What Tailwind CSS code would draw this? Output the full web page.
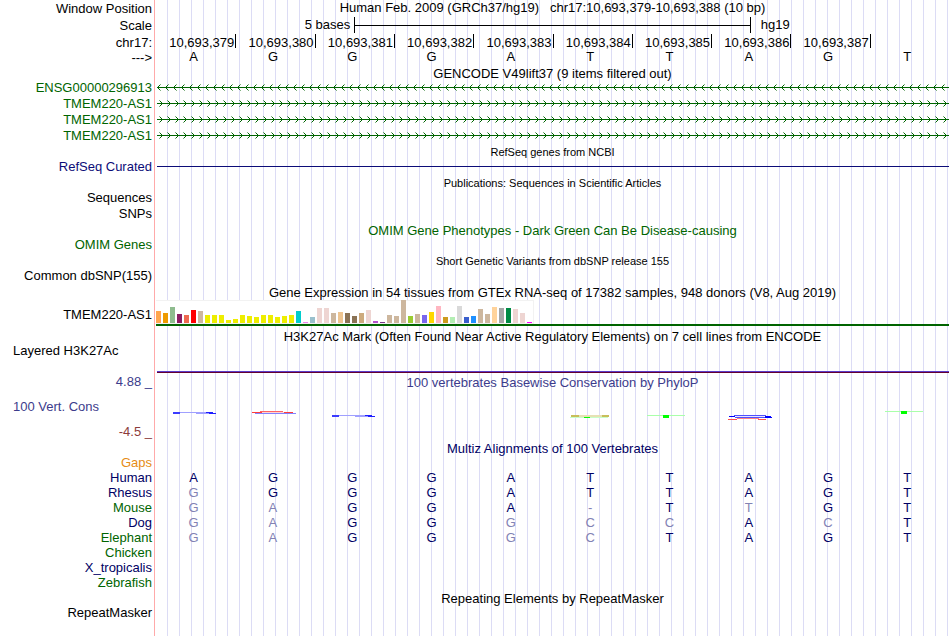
<!DOCTYPE html>
<html lang="en">
<head>
  <meta charset="UTF-8">
  <meta name="viewport" content="width=device-width, initial-scale=1.0">
  <title>Human Feb. 2009 (GRCh37/hg19) chr17:10,693,379-10,693,388</title>
  <script src="https://cdn.jsdelivr.net/npm/@tailwindcss/browser@4"></script>
</head>
<body class="bg-white">

<main class="flex min-h-screen overflow-hidden font-['Liberation_Sans',Arial,sans-serif] text-[13px] leading-4 text-black">

  <!-- Track labels -->
  <div class="w-[155px] shrink-0 border-r border-[#ffaaaa] pt-px pr-[2px] text-right whitespace-nowrap">
    <div class="h-[17px]">Window Position</div>
    <div class="h-[17px]">Scale</div>
    <div class="h-[15px]">chr17:</div>
    <div class="h-[30px]">---&gt;</div>
    <div class="h-16 text-[#006400]">
      <div>ENSG00000296913</div>
      <div>TMEM220-AS1</div>
      <div>TMEM220-AS1</div>
      <div>TMEM220-AS1</div>
    </div>
    <div class="mt-[15px] h-4 text-[#0c0c78]">RefSeq Curated</div>
    <div class="mt-[15px] h-4">Sequences</div>
    <div class="h-4">SNPs</div>
    <div class="mt-[15px] h-4 text-[#006400]">OMIM Genes</div>
    <div class="mt-[15px] h-4">Common dbSNP(155)</div>
    <div class="mt-[23px] h-4">TMEM220-AS1</div>
    <div class="mt-5 h-4 pl-[13px] text-left">Layered H3K27Ac</div>
    <div class="mt-[15px] h-4 text-[#3c3c8c]">4.88 _</div>
    <div class="mt-[9px] h-4 pl-[13px] text-left text-[#3c3c8c]">100 Vert. Cons</div>
    <div class="mt-[9px] h-4 text-[#8c3c3c]">-4.5 _</div>
    <div class="mt-[15px] leading-[15px]">
      <div class="text-[#e68c14]">Gaps</div>
      <div class="text-[#000064]">Human</div>
      <div class="text-[#000064]">Rhesus</div>
      <div class="text-[#006400]">Mouse</div>
      <div class="text-[#000064]">Dog</div>
      <div class="text-[#006400]">Elephant</div>
      <div class="text-[#006400]">Chicken</div>
      <div class="text-[#000064]">X_tropicalis</div>
      <div class="text-[#006400]">Zebrafish</div>
    </div>
    <div class="mt-[15px] h-4">RepeatMasker</div>
  </div>

  <!-- Tracks -->
  <div class="ml-px min-w-0 flex-1 bg-[repeating-linear-gradient(to_right,transparent_0_11px,#dcdcf5_11px_12px)] pr-px text-center whitespace-nowrap">
    <h1 class="h-4 whitespace-pre">Human Feb. 2009 (GRCh37/hg19)   chr17:10,693,379-10,693,388 (10 bp)</h1>

    <div class="grid h-[18px] grid-cols-4 items-center">
      <div class="pr-1 text-right">5 bases</div>
      <div class="col-span-2 flex h-4 items-center border-x border-black"><div class="h-px w-full bg-black"></div></div>
      <div class="pl-[10px] text-left">hg19</div>
    </div>

    <div id="positions" class="grid h-[15px] grid-cols-10 text-right leading-[18px]"></div>
    <div data-bases="AGGGATTAGT" class="grid h-4 grid-cols-10"></div>

    <h2 class="h-[15px] leading-[18px]">GENCODE V49lift37 (9 items filtered out)</h2>
    <svg class="block h-16 w-full" aria-label="GENCODE transcripts">
      <defs>
        <pattern id="minus" width="8" height="16" patternUnits="userSpaceOnUse">
          <path d="M1 7.5H4M2 6.5H3M2 8.5H3M3 5.5H4M3 9.5H4" stroke="#006400"/>
          <path d="M4 4.5H5M4 10.5H5" stroke="#006400" stroke-opacity=".5"/>
        </pattern>
        <pattern id="plus" width="8" height="16" patternUnits="userSpaceOnUse">
          <path d="M4 7.5H7M5 6.5H6M5 8.5H6M4 5.5H5M4 9.5H5" stroke="#006400"/>
          <path d="M3 4.5H4M3 10.5H4" stroke="#006400" stroke-opacity=".5"/>
        </pattern>
      </defs>
      <rect width="100%" height="16" fill="url(#minus)"/>
      <rect y="16" width="100%" height="48" fill="url(#plus)"/>
      <g fill="#006400">
        <rect x="1" y="7" width="100%" height="1"/>
        <rect x="1" y="23" width="100%" height="1"/>
        <rect x="1" y="39" width="100%" height="1"/>
        <rect x="1" y="55" width="100%" height="1"/>
      </g>
    </svg>

    <h2 class="h-[15px] text-[11px]">RefSeq genes from NCBI</h2>
    <div class="h-4 pt-[7px] pl-px"><div class="h-px bg-[#0c0c78]"></div></div>

    <h2 class="h-[47px] text-[11px]">Publications: Sequences in Scientific Articles</h2>

    <h2 class="h-[31px] leading-[18px] text-[#006400]">OMIM Gene Phenotypes - Dark Green Can Be Disease-causing</h2>

    <h2 class="h-[31px] text-[11px]">Short Genetic Variants from dbSNP release 155</h2>

    <h2 class="h-4 leading-[18px]">Gene Expression in 54 tissues from GTEx RNA-seq of 17382 samples, 948 donors (V8, Aug 2019)</h2>
    <div class="mb-[2px] border-b-2 border-[#006400]">
      <div id="gtex" class="flex h-6 w-[378px] items-end gap-[2px] border-b border-[#f0f0f0] bg-white shadow-[inset_0_1px_#f2f2f2,inset_-1px_0_#f2f2f2]"></div>
    </div>

    <h2 class="h-[15px] leading-[18px]">H3K27Ac Mark (Often Found Near Active Regulatory Elements) on 7 cell lines from ENCODE</h2>
    <div class="h-[31px] pt-7 pl-px"><div class="h-[2px] border-t border-[#5a3cc8] bg-[#640032]"></div></div>

    <h2 class="h-4 leading-[18px] text-[#3c3c8c]">100 vertebrates Basewise Conservation by PhyloP</h2>
    <!-- Conservation logo, one cell per base -->
    <div class="grid h-[51px] grid-cols-10">
      <svg class="h-[50px] w-full overflow-visible">
        <path d="M17 23H24" stroke="#3c3cff" stroke-width="2"/>
        <path d="M24 22.5H52M40 23.5H54" stroke="#a0a0ff"/>
        <path d="M50 22.5H57M53 23.5H60" stroke="#1e1eff"/>
      </svg>
      <svg class="h-[50px] w-full overflow-visible">
        <path d="M20 23.5H61" stroke="#8282ff"/>
        <path d="M17 22.5H27M49 22.5H58" stroke="#ff3c3c"/>
        <path d="M25 21.5H48" stroke="#ff6464"/>
        <path d="M27 22.5H49" stroke="#ffd2d2"/>
      </svg>
      <svg class="h-[50px] w-full overflow-visible">
        <path d="M17 26H24" stroke="#3c3cff" stroke-width="2"/>
        <path d="M24 25.5H52M40 26.5H54" stroke="#a0a0ff"/>
        <path d="M50 25.5H57M53 26.5H60" stroke="#1e1eff"/>
      </svg>
      <span></span>
      <span></span>
      <svg class="h-[50px] w-full overflow-visible">
        <path d="M18 26H26M49 26H56" stroke="#c8be5a" stroke-width="2"/>
        <path d="M26 26H49" stroke="#e6e1b4" stroke-width="2"/>
        <path d="M17 27.5H55" stroke="#c8ffc8"/>
        <path d="M31 27.5H37" stroke="#00ff00"/>
      </svg>
      <svg class="h-[50px] w-full overflow-visible">
        <path d="M15 25.5H53" stroke="#aaffaa"/>
        <path d="M31 26.5H37" stroke="#00ff00" stroke-width="3"/>
      </svg>
      <svg class="h-[50px] w-full overflow-visible">
        <path d="M23 25.5H55M24 27.5H55" stroke="#5050ff"/>
        <path d="M18 26.5H24M54 26.5H60M54 27.5H61" stroke="#0000ff"/>
        <path d="M25 26.5H53" stroke="#e6e6ff"/>
        <path d="M26 28.5H48" stroke="#ff8282"/>
        <path d="M17 29.5H26M47 29.5H55" stroke="#ff5050"/>
      </svg>
      <span></span>
      <svg class="h-[50px] w-full overflow-visible">
        <path d="M15 21.5H53" stroke="#aaffaa"/>
        <path d="M31 22.5H37" stroke="#00ff00" stroke-width="3"/>
      </svg>
    </div>

    <h2 class="h-[29px] text-[#000064]">Multiz Alignments of 100 Vertebrates</h2>
    <div class="h-[121px] leading-[15px] text-[#000064]">
      <div data-bases="AGGGATTAGT" class="grid grid-cols-10"></div>
      <div data-bases="gGGGATTAGT" class="grid grid-cols-10"></div>
      <div data-bases="gaGGA-TtGT" class="grid grid-cols-10"></div>
      <div data-bases="gaGGgccAcT" class="grid grid-cols-10"></div>
      <div data-bases="gaGGgcTAGT" class="grid grid-cols-10"></div>
    </div>

    <h2>Repeating Elements by RepeatMasker</h2>
  </div>
</main>

<script>
  // Coordinate ruler
  const positions = document.getElementById("positions");
  for (let pos = 379; pos <= 387; pos++) {
    positions.insertAdjacentHTML("beforeend",
      `<div class="-mr-px h-[14px] border-r border-black pr-px">10,693,${pos}</div>`);
  }

  // Lower case and gaps are bases that differ from human
  document.querySelectorAll("[data-bases]").forEach(row => {
    for (const base of row.dataset.bases) {
      const faded = base === "-" || base !== base.toUpperCase();
      row.insertAdjacentHTML("beforeend",
        `<span class="pr-1 ${faded ? "text-[#8282b4]" : ""}">${base.toUpperCase()}</span>`);
    }
  });

  // GTEx tissues: [height, color]
  const tissues = [
    [12, "#ffa54f"], [10, "#ee9a00"], [16, "#8fbc8f"], [9, "#8b1c62"], [8, "#ee6a50"], [13, "#ff0000"],
    [12, "#cdb79e"], [8, "#eeee00"], [8, "#eeee00"], [8, "#eeee00"], [3, "#eeee00"], [4, "#eeee00"],
    [8, "#eeee00"], [7, "#eeee00"], [6, "#eeee00"], [8, "#eeee00"], [8, "#eeee00"], [6, "#eeee00"],
    [7, "#eeee00"], [8, "#eeee00"], [12, "#00cdcd"], [1, "#ee82ee"], [6, "#9ac0cd"],
    [15, "#eed5d2"], [15, "#eed5d2"], [10, "#cdb79e"], [11, "#eec591"], [10, "#8b7355"], [7, "#8b7355"],
    [10, "#cdaa7d"], [13, "#eed5d2"], [2, "#b452cd"], [1, "#7a378b"], [8, "#cdb79e"], [7, "#cdb79e"],
    [23, "#cdb79e"], [7, "#9acd32"], [9, "#cdb79e"], [8, "#7a67ee"], [11, "#ffd700"], [17, "#ffb6c1"],
    [6, "#cd9b1d"], [6, "#b4eeb4"], [17, "#d9d9d9"], [6, "#3a5fcd"], [7, "#1e90ff"], [14, "#cdb79e"],
    [9, "#cdb79e"], [16, "#ffd39b"], [15, "#a6a6a6"], [15, "#008b45"], [14, "#eed5d2"], [10, "#eed5d2"],
    [1, "#ff00ff"]
  ];
  const gtex = document.getElementById("gtex");
  tissues.forEach(([height, color]) => {
    gtex.insertAdjacentHTML("beforeend",
      `<div class="w-[5px] shrink-0" style="height:${height}px;background:${color}"></div>`);
  });
</script>

</body>
</html>
